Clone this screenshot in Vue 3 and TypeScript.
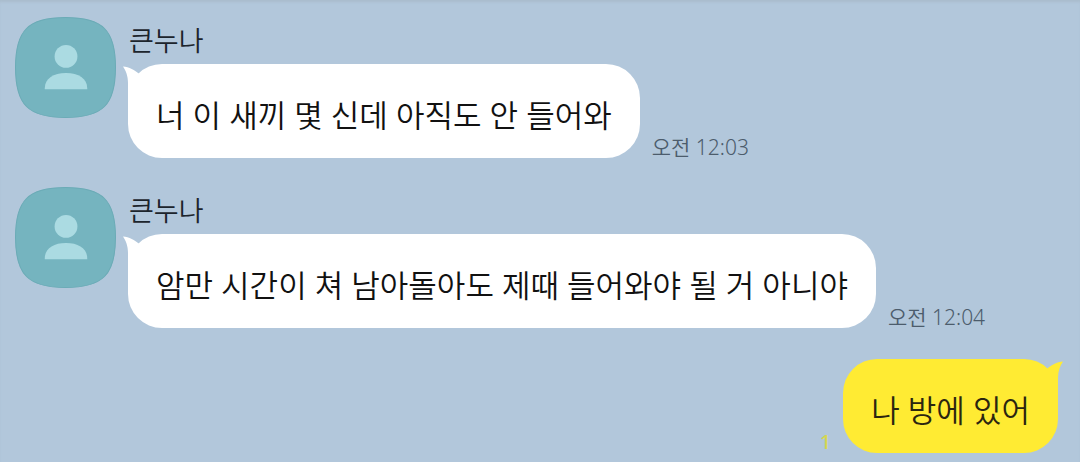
<script setup lang="ts">
interface Message { id: number; mine: boolean; sender?: string; text: string; time?: string; unread?: number }
const messages: Message[] = [
  { id: 1, mine: false, sender: '큰누나', text: '너 이 새끼 몇 신데 아직도 안 들어와', time: '오전 12:03' },
  { id: 2, mine: false, sender: '큰누나', text: '암만 시간이 쳐 남아돌아도 제때 들어와야 될 거 아니야', time: '오전 12:04' },
  { id: 3, mine: true, text: '나 방에 있어', unread: 1 },
]
</script>

<template>
  <main class="chat">
    <article v-for="m in messages" :key="m.id" class="row" :class="{ mine: m.mine }">
      <svg v-if="!m.mine" class="avatar" viewBox="0 0 100 100" aria-hidden="true">
        <path d="M50 .5C87 .5 99.500 13 99.500 50S87 99.500 50 99.500 .5 87 .5 50 13 .5 50 .5Z" fill="#75b4bf" stroke="#6babb6" />
        <circle cx="50.500" cy="39" r="11.300" fill="#abdbe2" />
        <path d="M29.500 71.500v-1C29.500 61 38 55.500 50.500 55.500S71.500 61 71.500 70.500v1Z" fill="#abdbe2" />
      </svg>
      <div class="body">
        <div v-if="m.sender" class="name">{{ m.sender }}</div>
        <div class="line">
          <div class="bubble">
            <svg class="tail" viewBox="0 0 26 40" aria-hidden="true"><path d="M1 2.500C7 3 13 6 17 9.800V40H6V19C6 12 4 7 1 2.500Z" fill="currentColor" /></svg>
            <span>{{ m.text }}</span>
          </div>
          <time v-if="m.time" class="meta">{{ m.time }}</time>
          <span v-if="m.unread" class="unread">{{ m.unread }}</span>
        </div>
      </div>
    </article>
  </main>
</template>

<style>
body { margin: 0; background: #b2c7db; }
</style>
<style scoped>
.chat { box-sizing: border-box; min-height: 100vh; padding: 17px 22px 8px 15px; display: flex; flex-direction: column; gap: 29px; background: #b2c7db; box-shadow: inset 0 3px 3px -1px #a9bccd; font-family: "Noto Sans", "Noto Sans CJK KR", sans-serif; color: #111; }
.row { display: flex; align-items: flex-start; gap: 12px; }
.avatar { width: 101px; height: 101px; flex: none; }
.body { min-width: 0; }
.name { height: 47px; padding-left: 1px; line-height: 48px; font-size: 27px; font-weight: 350; color: #1c242c; }
.line { display: flex; align-items: flex-end; gap: 12px; }
.bubble { position: relative; padding: 30px 28px 21px; border-radius: 34px; background: #fff; color: #fff; font-size: 31px; line-height: 43px; font-weight: 350; }
.bubble span { position: relative; color: #111; }
.tail { position: absolute; left: -6px; top: 0; width: 26px; height: 40px; }
.meta { font-size: 21px; line-height: 22px; color: #4c5c6c; font-weight: 350; }
.mine { justify-content: flex-end; margin-top: 2px; }
.mine .line { flex-direction: row-reverse; }
.mine .bubble { background: #ffeb33; color: #ffeb33; }
.mine .bubble span { color: #2b2510; }
.mine .tail { left: auto; right: -6px; transform: scaleX(-1); }
.unread { font-size: 20px; line-height: 22px; color: #d5d650; font-weight: 500; }
</style>
